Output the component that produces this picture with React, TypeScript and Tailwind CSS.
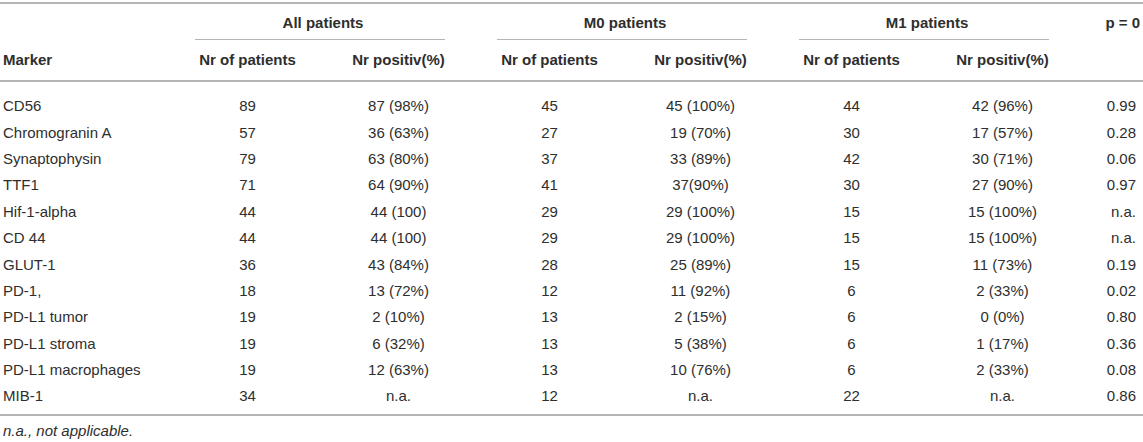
import React from 'react';

type Row = [string, string, string, string, string, string, string, string];

const rows: Row[] = [
  ['CD56', '89', '87 (98%)', '45', '45 (100%)', '44', '42 (96%)', '0.99'],
  ['Chromogranin A', '57', '36 (63%)', '27', '19 (70%)', '30', '17 (57%)', '0.28'],
  ['Synaptophysin', '79', '63 (80%)', '37', '33 (89%)', '42', '30 (71%)', '0.06'],
  ['TTF1', '71', '64 (90%)', '41', '37(90%)', '30', '27 (90%)', '0.97'],
  ['Hif-1-alpha', '44', '44 (100)', '29', '29 (100%)', '15', '15 (100%)', 'n.a.'],
  ['CD 44', '44', '44 (100)', '29', '29 (100%)', '15', '15 (100%)', 'n.a.'],
  ['GLUT-1', '36', '43 (84%)', '28', '25 (89%)', '15', '11 (73%)', '0.19'],
  ['PD-1,', '18', '13 (72%)', '12', '11 (92%)', '6', '2 (33%)', '0.02'],
  ['PD-L1 tumor', '19', '2 (10%)', '13', '2 (15%)', '6', '0 (0%)', '0.80'],
  ['PD-L1 stroma', '19', '6 (32%)', '13', '5 (38%)', '6', '1 (17%)', '0.36'],
  ['PD-L1 macrophages', '19', '12 (63%)', '13', '10 (76%)', '6', '2 (33%)', '0.08'],
  ['MIB-1', '34', 'n.a.', '12', 'n.a.', '22', 'n.a.', '0.86'],
];

const groups = ['All patients', 'M0 patients', 'M1 patients'];

const cols = 'grid grid-cols-[172px_repeat(6,151px)_1fr]';

const App: React.FC = () => {
  return (
    <div className="w-[1143px] h-[442px] bg-white pt-[2px] font-['Liberation_Sans',Arial,sans-serif] text-[15px] leading-[18px] text-[#2e2e2e]">
      <div className="border-t-2 border-[#b5b5b5]">
        {/* header row 1 */}
        <div className={`${cols} h-[36px]`}>
          <div />
          {groups.map((g) => (
            <div key={g} className="col-span-2 flex flex-col justify-between pt-[10px]">
              <div className="text-center font-bold">{g}</div>
              <div className="ml-[23px] mr-[29px] border-t border-[#b5b5b5]" />
            </div>
          ))}
          <div className="pt-[10px] pr-[3px] text-right font-bold">p = 0</div>
        </div>
        {/* header row 2 */}
        <div className={`${cols} h-[40px] items-center font-bold`}>
          <div className="pl-[3px]">Marker</div>
          {groups.map((g) => (
            <React.Fragment key={g}>
              <div className="text-center">Nr of patients</div>
              <div className="text-center">Nr positiv(%)</div>
            </React.Fragment>
          ))}
          <div />
        </div>
      </div>

      <div className="border-t-2 border-b-2 border-[#b5b5b5] pt-[11px] pb-[4px]">
        {rows.map((r) => (
          <div key={r[0]} className={`${cols} h-[26.4px] items-center`}>
            <div className="pl-[3px]">{r[0]}</div>
            {r.slice(1, 7).map((v, i) => (
              <div key={i} className="text-center">
                {v}
              </div>
            ))}
            <div className="pr-[7px] text-right">{r[7]}</div>
          </div>
        ))}
      </div>

      <p className="mt-[6px] pl-[3px] italic">n.a., not applicable.</p>
    </div>
  );
};

export default App;
